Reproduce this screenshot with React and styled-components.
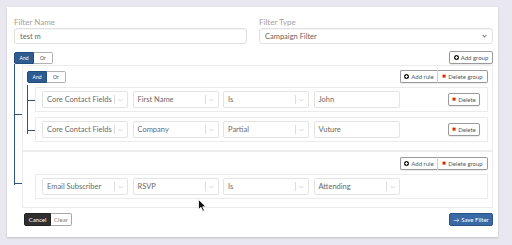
import React from 'react'
import styled, { createGlobalStyle, css } from 'styled-components'

const Global = createGlobalStyle`
  html, body {
    margin: 0;
    padding: 0;
    background: #e9e7ef;
    font-family: Lato, "Open Sans", "Liberation Sans", sans-serif;
  }
  * { box-sizing: border-box; }
`

const Page = styled.div`
  position: relative;
  width: 512px;
  height: 245px;
  overflow: hidden;
  padding: 7px 0 0 7px;
`

const Card = styled.div`
  width: 491px;
  height: 230px;
  background: #fff;
  box-shadow: 0 1px 2px rgba(0, 0, 0, 0.18);
  padding: 11px 5px 0 7px;
`

const FieldRow = styled.div`
  display: grid;
  grid-template-columns: 233px 1fr;
  column-gap: 12px;
`

const Field = styled.div`
  display: flex;
  flex-direction: column;
`

const Label = styled.div`
  font-size: 8px;
  line-height: 9px;
  height: 9px;
  color: #a2a2a2;
  margin-bottom: 1px;
`

const Box = styled.div`
  height: 16px;
  border: 1px solid #e0e0e0;
  border-radius: 3px;
  padding: 0 5px;
  display: flex;
  align-items: center;
  font-size: 7.5px;
  color: #666;
  box-shadow: inset 0 1px 1px rgba(0, 0, 0, 0.04);
`

const NativeCaret = styled.span`
  margin-left: auto;
  width: 3px;
  height: 3px;
  border-right: 1px solid #777;
  border-bottom: 1px solid #777;
  transform: rotate(45deg);
  margin-top: -2px;
  margin-right: 1px;
`

const RootGroup = styled.div`
  margin-top: 7px;
`

const GroupHeader = styled.div`
  display: flex;
  align-items: center;
  justify-content: space-between;
  height: 13px;
`

const Toggle = styled.div`
  display: flex;
  height: 12px;
`

const ToggleBtn = styled.span`
  width: ${p => (p.$active ? 20 : 19)}px;
  display: flex;
  align-items: center;
  justify-content: center;
  font-size: 5px;
  border: 1px solid ${p => (p.$active ? '#244c7d' : '#b0b0b0')};
  background: ${p => (p.$active ? '#2e5b90' : '#fff')};
  color: ${p => (p.$active ? '#fff' : '#444')};
  border-radius: ${p => (p.$active ? '2px 0 0 2px' : '0 2px 2px 0')};
  ${p => !p.$active && css`border-left: none;`}
`

const BtnGroup = styled.div`
  display: flex;
  margin-left: auto;
`

const SmallBtn = styled.span`
  height: 13px;
  width: ${p => p.$w}px;
  display: inline-flex;
  align-items: center;
  justify-content: center;
  gap: 2px;
  font-size: 6px;
  color: #555;
  background: #fff;
  border: 1px solid #9a9a9a;
  border-radius: 2px;
  box-shadow: 0 1px 1px rgba(0, 0, 0, 0.08);
  white-space: nowrap;
  & + & {
    border-left-color: #d0d0d0;
    border-radius: 0 2px 2px 0;
  }
  &:first-child:not(:last-child) {
    border-right: none;
    border-radius: 2px 0 0 2px;
  }
`

const RedX = styled.span`
  color: #d9201c;
  font-size: 5px;
  font-weight: bold;
  line-height: 1;
`

const RootList = styled.div`
  position: relative;
  padding-left: 8px;
  &::before {
    content: '';
    position: absolute;
    left: 0;
    top: -1px;
    width: 1px;
    height: 121px;
    background: #34527e;
  }
`

const Group = styled.div`
  position: relative;
  margin-top: ${p => p.$mt}px;
  border: 1px solid #ececec;
  padding: ${p => p.$pt}px 4px 8px 4px;
  &::before {
    content: '';
    position: absolute;
    left: -9px;
    top: ${p => p.$tick}px;
    width: 8px;
    height: 1px;
    background: #34527e;
  }
`

const RuleList = styled.div`
  position: relative;
  margin-top: 4px;
  padding-left: 8px;
  display: flex;
  flex-direction: column;
  gap: 5px;
  ${p => p.$tree && css`
    &::before {
      content: '';
      position: absolute;
      left: 0;
      top: -2px;
      width: 1px;
      height: 49px;
      background: #34527e;
    }
  `}
`

const Rule = styled.div`
  position: relative;
  height: 25px;
  border: 1px solid #ebebeb;
  padding: 3px 7px 0 6px;
  display: flex;
  align-items: flex-start;
  gap: 4.5px;
  ${p => p.$tree && css`
    &::before {
      content: '';
      position: absolute;
      left: -9px;
      top: 12px;
      width: 8px;
      height: 1px;
      background: #34527e;
    }
  `}
`

const Picker = styled.div`
  width: 86px;
  height: 17px;
  border: 1px solid #e3e3e3;
  border-radius: 2px;
  display: flex;
  align-items: center;
  padding-left: 4px;
  font-size: 7.5px;
  color: #6a6a6a;
  white-space: nowrap;
`

const Indicator = styled.span`
  margin-left: auto;
  display: flex;
  align-items: center;
  height: 100%;
  &::before {
    content: '';
    width: 1px;
    height: 9px;
    background: #dcdcdc;
  }
`

const Chevron = styled.svg`
  width: 5px;
  height: 4px;
  margin: 0 4px 0 3px;
`

const DeleteBtn = styled(SmallBtn)`
  margin-left: auto;
  margin-top: 2px;
`

const Footer = styled.div`
  display: flex;
  align-items: center;
  margin-top: 5px;
  padding-left: 10px;
`

const FootBtn = styled.span`
  height: 13px;
  width: ${p => p.$w}px;
  display: inline-flex;
  align-items: center;
  justify-content: center;
  font-size: 6px;
  ${p => p.$dark ? css`
    background: #2f2f2f;
    color: #fff;
    border: 1px solid #222;
    border-radius: 2px 0 0 2px;
  ` : css`
    background: #fff;
    color: #777;
    border: 1px solid #a8a8a8;
    border-left: none;
    border-radius: 0 2px 2px 0;
  `}
`

const SaveBtn = styled.span`
  margin-left: auto;
  height: 13px;
  width: 44px;
  display: inline-flex;
  align-items: center;
  justify-content: center;
  gap: 2px;
  font-size: 6px;
  color: #fff;
  background: #3a6aa5;
  border: 1px solid #2a5386;
  border-radius: 2px;
`

const Cursor = styled.svg`
  position: absolute;
  left: 198px;
  top: 199px;
  width: 9px;
  height: 13px;
`

const PlusIcon = () => (
  <svg width="5" height="5" viewBox="0 0 10 10">
    <circle cx="5" cy="5" r="5" fill="#222" />
    <path d="M5 2.2v5.6M2.2 5h5.6" stroke="#fff" strokeWidth="1.8" />
  </svg>
)

const Select = ({ children }) => (
  <Picker>
    {children}
    <Indicator>
      <Chevron viewBox="0 0 10 6">
        <path d="M1 1l4 4 4-4" fill="none" stroke="#bdbdbd" strokeWidth="1.2" />
      </Chevron>
    </Indicator>
  </Picker>
)

const RuleActions = () => (
  <BtnGroup>
    <SmallBtn $w={37}><PlusIcon />Add rule</SmallBtn>
    <SmallBtn $w={51}><RedX>✖</RedX>Delete group</SmallBtn>
  </BtnGroup>
)

const App = () => (
  <>
    <Global />
    <Page>
      <Card>
        <FieldRow>
          <Field>
            <Label>Filter Name</Label>
            <Box>test m</Box>
          </Field>
          <Field>
            <Label>Filter Type</Label>
            <Box>Campaign Filter<NativeCaret /></Box>
          </Field>
        </FieldRow>

        <RootGroup>
          <GroupHeader>
            <Toggle>
              <ToggleBtn $active>And</ToggleBtn>
              <ToggleBtn>Or</ToggleBtn>
            </Toggle>
            <SmallBtn $w={44}><PlusIcon />Add group</SmallBtn>
          </GroupHeader>

          <RootList>
            <Group $mt={1} $pt={4} $tick={48}>
              <GroupHeader>
                <Toggle>
                  <ToggleBtn $active>And</ToggleBtn>
                  <ToggleBtn>Or</ToggleBtn>
                </Toggle>
                <RuleActions />
              </GroupHeader>
              <RuleList $tree>
                <Rule $tree>
                  <Select>Core Contact Fields</Select>
                  <Select>First Name</Select>
                  <Select>Is</Select>
                  <Picker>John</Picker>
                  <DeleteBtn $w={32}><RedX>✖</RedX>Delete</DeleteBtn>
                </Rule>
                <Rule $tree>
                  <Select>Core Contact Fields</Select>
                  <Select>Company</Select>
                  <Select>Partial</Select>
                  <Picker>Vuture</Picker>
                  <DeleteBtn $w={32}><RedX>✖</RedX>Delete</DeleteBtn>
                </Rule>
              </RuleList>
            </Group>

            <Group $mt={0} $pt={5} $tick={31}>
              <GroupHeader>
                <RuleActions />
              </GroupHeader>
              <RuleList>
                <Rule>
                  <Select>Email Subscriber</Select>
                  <Select>RSVP</Select>
                  <Select>Is</Select>
                  <Select>Attending</Select>
                </Rule>
              </RuleList>
            </Group>
          </RootList>
        </RootGroup>

        <Footer>
          <FootBtn $dark $w={27}>Cancel</FootBtn>
          <FootBtn $w={21}>Clear</FootBtn>
          <SaveBtn>
            <span>→</span>Save Filter
          </SaveBtn>
        </Footer>
      </Card>
      <Cursor viewBox="0 0 9 13">
        <path d="M0.5 0.5 L0.5 10.5 L3 8.3 L4.8 12.3 L6.4 11.6 L4.7 7.8 L8 7.8 Z" fill="#111" stroke="#fff" strokeWidth="0.8" />
      </Cursor>
    </Page>
  </>
)

export default App
